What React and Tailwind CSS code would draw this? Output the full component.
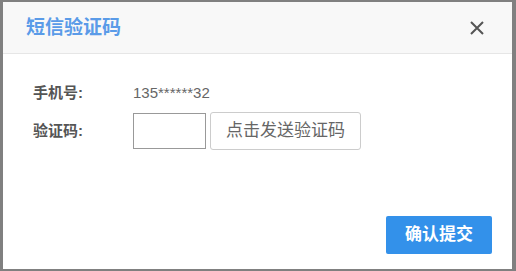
import React from "react";

const font = { fontFamily: '"Liberation Sans", "Noto Sans CJK SC", sans-serif' };

export default function App() {
  return (
    <div className="w-[516px] h-[271px] bg-[#808080] pt-[2px] pl-[3px] overflow-hidden" style={font}>
      <div className="w-[509px] h-[267px] bg-white flex flex-col">
        {/* header */}
        <div className="h-[52px] bg-[#f8f8f8] border-b border-[#e6e6e6] flex items-center justify-between pl-[23px] pr-[27px]">
          <span className="text-[19px] font-bold text-[#5a9be8] leading-none">短信验证码</span>
          <svg width="16" height="16" viewBox="0 0 16 16" className="text-[#555]">
            <path d="M2 2 L14 14 M14 2 L2 14" stroke="currentColor" strokeWidth="2" />
          </svg>
        </div>

        {/* body */}
        <div className="flex-1 flex flex-col pl-[30px] pt-[27px] gap-[7px]">
          <div className="flex items-center h-[24px]">
            <span className="w-[100px] text-[15px] font-bold text-[#555]">手机号:</span>
            <span className="text-[15px] text-[#666]">135******32</span>
          </div>
          <div className="flex items-center">
            <span className="w-[100px] text-[15px] font-bold text-[#555]">验证码:</span>
            <input className="w-[73px] h-[36px] border border-[#999] outline-none px-1 text-[15px]" />
            <button className="ml-[4px] w-[151px] h-[38px] border border-[#ccc] rounded-[3px] bg-white text-[17px] text-[#666]">
              点击发送验证码
            </button>
          </div>
        </div>

        {/* footer */}
        <div className="flex justify-end pr-[20px] pb-[15px]">
          <button className="w-[106px] h-[38px] rounded-[2px] bg-[#3391ea] text-white text-[17px] font-bold">
            确认提交
          </button>
        </div>
      </div>
    </div>
  );
}
